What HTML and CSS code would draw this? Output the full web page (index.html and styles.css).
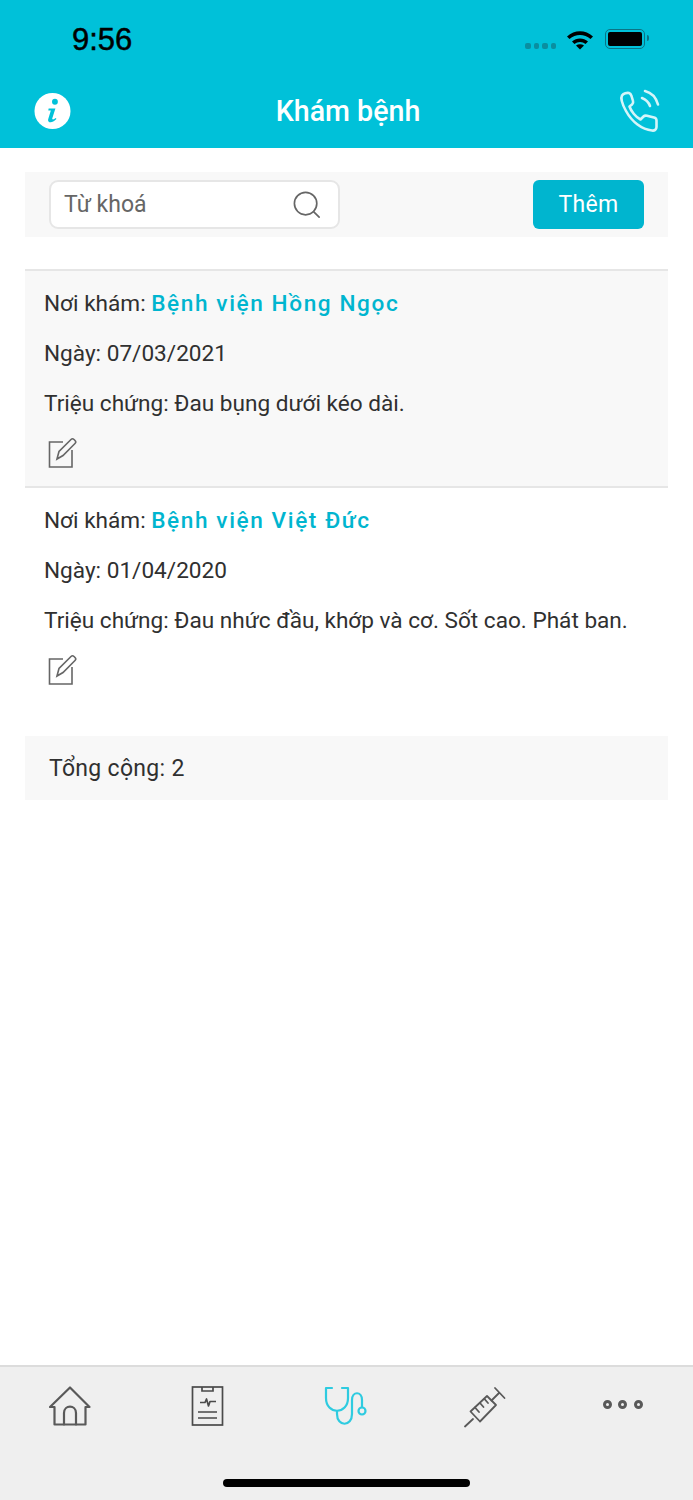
FILE: index.html
```html
<!DOCTYPE html>
<html lang="vi">
<head>
<meta charset="UTF-8">
<meta name="viewport" content="width=device-width, initial-scale=1.0">
<title>Khám bệnh</title>
<link rel="stylesheet" href="styles.css">
</head>
<body>
<div class="app">
    <header class="top">
        <div class="status">
            <span class="time">9:56</span>
            <div class="status-icons">
                <div class="signal"><i></i><i></i><i></i><i></i></div>
                <svg class="wifi" width="28" height="21" viewBox="0 0 28 21">
                    <path d="M1 7.500C8.500 0.500 19.500 0.500 27 7.500L24.500 10C18.500 4.500 9.500 4.500 3.500 10Z" fill="#000"/>
                    <path d="M6 12.500C10.500 8.500 17.500 8.500 22 12.500L19.500 15C16.500 12.300 11.500 12.300 8.500 15Z" fill="#000"/>
                    <path d="M10 16.500C12.300 14.800 15.700 14.800 18 16.500L14 20.500Z" fill="#000"/>
                </svg>
                <div class="battery"><div class="battery-fill"></div></div>
            </div>
        </div>
        <div class="nav">
            <svg class="icon-info" width="37" height="38" viewBox="0 0 38 38">
                <ellipse cx="19" cy="19" rx="18.500" ry="18.500" fill="#fff"/>
                <circle cx="21.500" cy="9.500" r="3" fill="#00c1d9"/>
                <path d="M15 16.500H22L18.800 26.500C18.400 28 19.800 28.300 22.500 26.300L23 27.300C20 30.500 17.800 31 15.800 30.500C14.300 30 14.200 28.500 14.700 27L17.300 18.500H14.700Z" fill="#00c1d9"/>
            </svg>
            <h1 class="title">Khám bệnh</h1>
            <svg class="icon-phone" width="44" height="44" viewBox="0 0 44 44" fill="none" stroke="#d5f5f9" stroke-width="2.600" stroke-linecap="round" stroke-linejoin="round">
                <path d="M4 6.500C5.500 4.500 9 3.500 11 4C12.500 4.500 13 5.500 13.500 7L15 12C15.500 13.500 15 14.500 14 15.500L11.500 17.500C13 22 17.500 28 22.500 30.500L25.500 27.500C26.500 26.500 27.500 26.500 29 26.800L36 28.500C38 29 38.500 30 38.500 31.500V38C38.500 40.500 36.500 42 34 41.500C24 40.500 14 33 8 22C5 16.500 2 10 4 6.500Z"/>
                <path d="M24 9C28 10.500 30.500 13 32 17"/>
                <path d="M27 2C33 3.500 38 8.500 40 15.500"/>
            </svg>
        </div>
    </header>

    <main class="content">
        <section class="filter">
            <div class="search">
                <span class="search-text">Từ khoá</span>
                <svg width="28" height="28" viewBox="0 0 30 30" fill="none" stroke="#666" stroke-width="1.800" stroke-linecap="round">
                    <circle cx="13.500" cy="13.500" r="12"/>
                    <path d="M22 22L28 28"/>
                </svg>
            </div>
            <button class="add-btn">Thêm</button>
        </section>

        <section class="list">
            <article class="visit visit-alt">
                <p class="line">Nơi khám: <a class="place">Bệnh viện Hồng Ngọc</a></p>
                <p class="line">Ngày: 07/03/2021</p>
                <p class="line">Triệu chứng: Đau bụng dưới kéo dài.</p>
                <div class="line">
                    <svg class="edit" width="30" height="32" viewBox="0 0 30 32" fill="none" stroke="#666" stroke-width="1.600">
                        <path d="M16 5H2.500V30H25V13"/>
                        <path d="M10 22L12 14.500L24 2.500C25 1.500 26 1.500 27 2.500L28 3.500C29 4.500 29 5.500 28 6.500L16 18.500Z"/>
                    </svg>
                </div>
            </article>
            <article class="visit">
                <p class="line">Nơi khám: <a class="place">Bệnh viện Việt Đức</a></p>
                <p class="line">Ngày: 01/04/2020</p>
                <p class="line">Triệu chứng: Đau nhức đầu, khớp và cơ. Sốt cao. Phát ban.</p>
                <div class="line">
                    <svg class="edit" width="30" height="32" viewBox="0 0 30 32" fill="none" stroke="#666" stroke-width="1.600">
                        <path d="M16 5H2.500V30H25V13"/>
                        <path d="M10 22L12 14.500L24 2.500C25 1.500 26 1.500 27 2.500L28 3.500C29 4.500 29 5.500 28 6.500L16 18.500Z"/>
                    </svg>
                </div>
            </article>
        </section>

        <section class="total">Tổng cộng: 2</section>
    </main>

    <footer class="tabs">
        <div class="tab-row">
            <div class="tab">
                <svg width="42" height="40" viewBox="0 0 42 40" fill="none" stroke="#595959" stroke-width="2.200" stroke-linejoin="round" stroke-linecap="round">
                    <path d="M5.500 38.500H36.500V21H40.500L21 1.500L1 21H5.500Z"/>
                    <path d="M15 38.500V27C15 18.500 27 18.500 27 27V38.500"/>
                </svg>
            </div>
            <div class="tab">
                <svg width="34" height="40" viewBox="0 0 34 40" fill="none" stroke="#4a4a4a" stroke-width="1.700">
                    <rect x="1.500" y="1" width="30" height="38"/>
                    <path d="M11 1V5H22V1"/>
                    <path d="M9 16.500H14L15.500 13L17.500 20L19 15.500H25" stroke-linejoin="round"/>
                    <path d="M7 26H26M7 32H26"/>
                </svg>
            </div>
            <div class="tab">
                <svg width="44" height="40" viewBox="0 0 44 40" fill="none" stroke="#2ecbe0" stroke-width="2.200" stroke-linecap="round" stroke-linejoin="round">
                    <path d="M8 2H2V12C2 29 24 29 24 12V2H18"/>
                    <path d="M13 25V28C13 41 28 41 28 28V14C28 5 38 5 38 14V21"/>
                    <circle cx="38" cy="25" r="3.500"/>
                </svg>
            </div>
            <div class="tab">
                <svg width="42" height="42" viewBox="0 0 42 42" fill="none" stroke="#595959" stroke-width="1.800" stroke-linecap="round">
                    <path d="M1 40.500L9 33"/>
                    <path d="M6.500 25.500L23 10L32 19L16 35.500Z" stroke-linejoin="round"/>
                    <path d="M27.500 14.500L35 7M31 2L40.500 12M11 21.500L15 26M16 17L19.500 21M20.500 13L24 17"/>
                </svg>
            </div>
            <div class="tab">
                <div class="dots"><i></i><i></i><i></i></div>
            </div>
        </div>
        <div class="home-bar"></div>
    </footer>
</div>
</body>
</html>
```

FILE: styles.css
```css
* {
    padding: 0;
    margin: 0;
    box-sizing: border-box;
}
body {
    font-family: Roboto, "Noto Sans", sans-serif;
    background-color: #ffffff;
    color: #303030;
}
.app {
    display: flex;
    flex-direction: column;
    height: 1500px;
}

/* top bar */
.top {
    height: 148px;
    background-color: #00c1d9;
    display: flex;
    flex-direction: column;
}
.status {
    height: 78px;
    display: flex;
    justify-content: space-between;
    align-items: center;
    padding: 0 48px 0 72px;
}
.time {
    font-family: "Liberation Sans", Arial, sans-serif;
    font-size: 31px;
    font-weight: 500;
    color: #000000;
    -webkit-text-stroke: 0.5px #000;
    padding-top: 2px;
}
.status-icons {
    display: flex;
    align-items: center;
}
.signal {
    display: flex;
    gap: 3px;
    margin: 14px 10px 0 0;
}
.signal i {
    width: 5.500px;
    height: 5.500px;
    border-radius: 2px;
    background-color: #0a8ea0;
}
.wifi {
    margin-right: 11px;
}
.battery {
    position: relative;
    width: 40px;
    height: 20px;
    padding: 2px;
    border: 1.500px solid #0a7485;
    border-radius: 5px;
}
.battery::after {
    content: "";
    position: absolute;
    right: -5px;
    top: 5px;
    width: 2px;
    height: 6px;
    background-color: #0a7485;
    border-radius: 0 2px 2px 0;
}
.battery-fill {
    height: 100%;
    background-color: #000000;
    border-radius: 2px;
}
.nav {
    flex: 1;
    display: flex;
    justify-content: space-between;
    align-items: center;
    padding: 0 31px 4px 34px;
}
.title {
    font-size: 28.600px;
    font-weight: 500;
    color: #ffffff;
    margin-left: 7px;
}

/* search */
.content {
    flex: 1;
    padding: 24px 25px 0;
}
.filter {
    height: 65px;
    background-color: #f8f8f8;
    display: flex;
    justify-content: space-between;
    padding: 8px 24px;
}
.search {
    width: 291px;
    height: 49px;
    background-color: #ffffff;
    border: 2px solid #e6e6e6;
    border-radius: 9px;
    display: flex;
    justify-content: space-between;
    align-items: center;
    padding: 0 17px 0 13px;
}
.search-text {
    font-size: 23px;
    color: #666666;
}
.add-btn {
    width: 111px;
    height: 49px;
    background-color: #00b5cf;
    color: #ffffff;
    font-family: inherit;
    font-size: 23px;
    letter-spacing: 0.3px;
    border: none;
    border-radius: 6px;
}

/* list */
.list {
    margin-top: 32px;
}
.visit {
    border-top: 2px solid #e6e6e6;
    padding: 7px 19px 8px;
}
.visit-alt {
    background-color: #f8f8f8;
}
.line {
    height: 50px;
    display: flex;
    align-items: center;
    padding-top: 1px;
    font-size: 22.600px;
    white-space: pre;
}
.place {
    color: #00b5cf;
    font-weight: 500;
    letter-spacing: 1.600px;
}
.edit {
    margin: -2px 0 0 3px;
}
.total {
    height: 64px;
    margin-top: 33px;
    background-color: #f8f8f8;
    display: flex;
    align-items: center;
    padding-left: 24px;
    font-size: 23px;
    letter-spacing: 0.3px;
}

/* bottom tabs */
.tabs {
    height: 135px;
    background-color: #efefef;
    border-top: 2px solid #dcdcdc;
    display: flex;
    flex-direction: column;
    align-items: center;
}
.tab-row {
    width: 100%;
    height: 112px;
    display: grid;
    grid-template-columns: repeat(5, 1fr);
    padding: 0 1px;
}
.tab {
    display: flex;
    justify-content: center;
    padding-top: 19px;
}
.dots {
    display: flex;
    gap: 6.500px;
    padding-top: 14px;
}
.dots i {
    width: 9px;
    height: 9px;
    border: 3px solid #595959;
    border-radius: 50%;
}
.home-bar {
    width: 247px;
    height: 8px;
    background-color: #000000;
    border-radius: 4px;
}
```
